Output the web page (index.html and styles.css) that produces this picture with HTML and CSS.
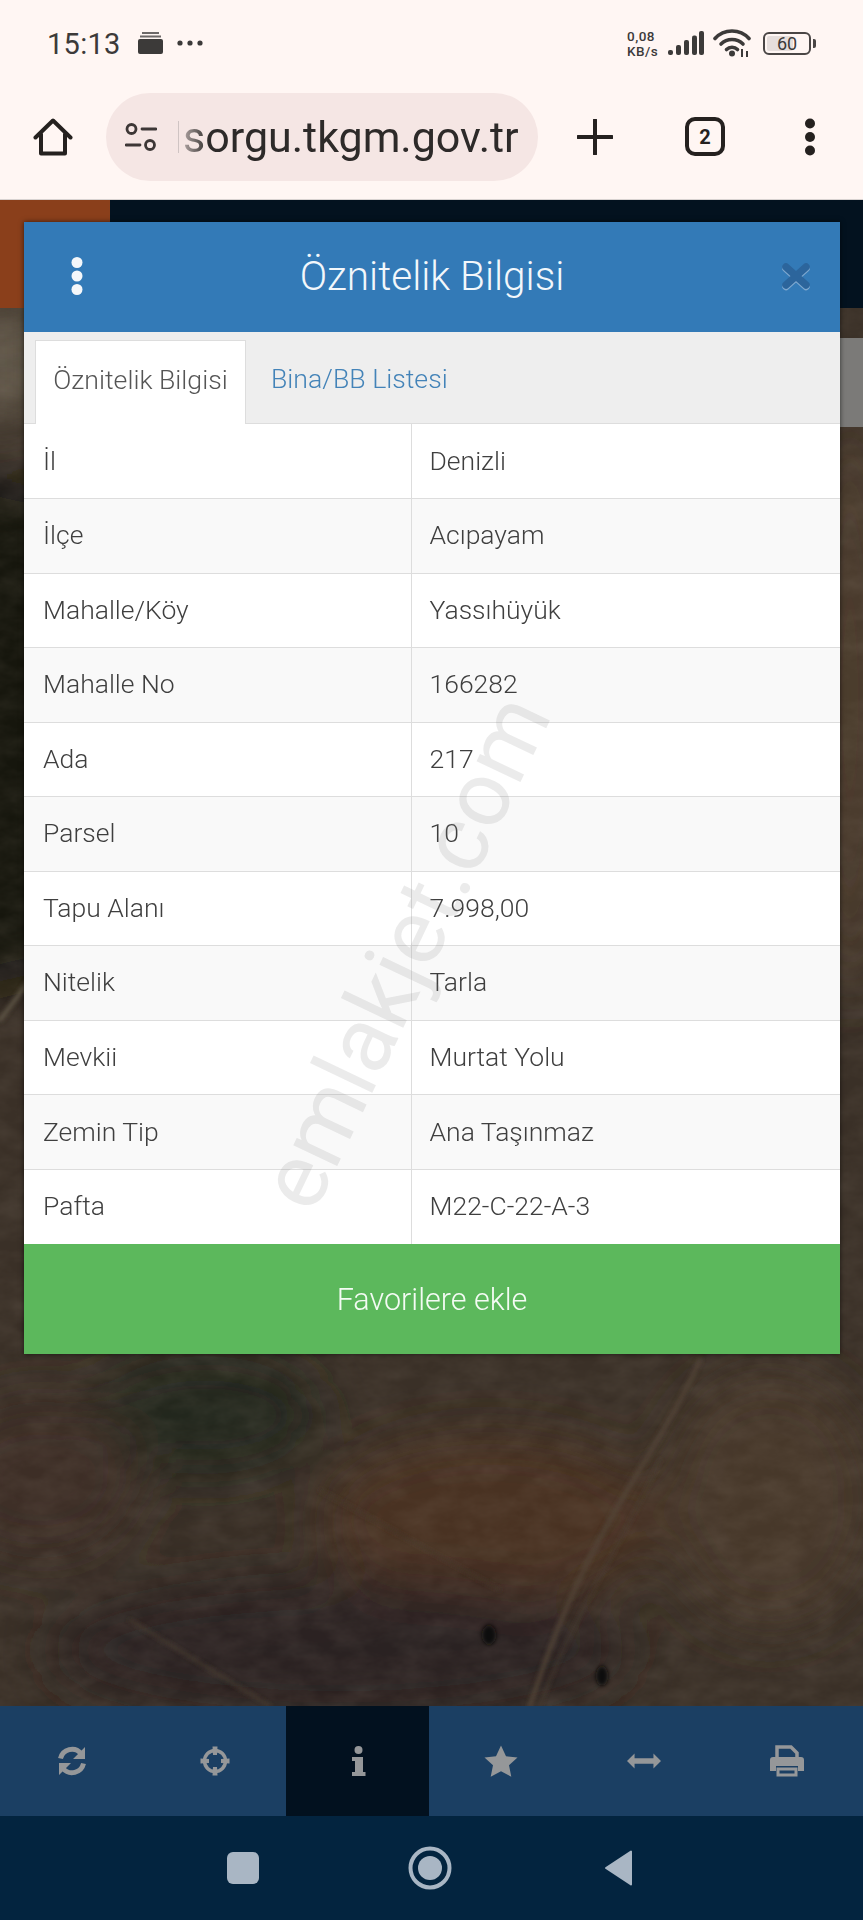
FILE: index.html
```html
<!DOCTYPE html>
<html lang="tr">
<head>
<meta charset="utf-8">
<title>Öznitelik Bilgisi</title>
<link rel="stylesheet" href="styles.css">
</head>
<body>
<div class="phone">
  <header class="status">
    <span class="time">15:13</span>
    <svg class="ic-card" viewBox="0 0 25 22"><path d="M4 0h17v2H4zM2 3.500h21v2H2z" opacity=".75"/><rect y="7" width="25" height="15" rx="2"/></svg>
    <svg class="ic-more" viewBox="0 0 26 6"><circle cx="3" cy="3" r="2.600"/><circle cx="13" cy="3" r="2.600"/><circle cx="23" cy="3" r="2.600"/></svg>
    <div class="status-right">
      <div class="speed"><span>0,08</span><span>KB/s</span></div>
      <svg class="ic-signal" viewBox="0 0 36 25"><rect x="0" y="19" width="5" height="5" rx="2"/><rect x="8" y="14" width="5" height="10" rx="2"/><rect x="16" y="9" width="5" height="15" rx="2"/><rect x="24" y="4.500" width="5" height="19.500" rx="2"/><rect x="31" y="0" width="5" height="24" rx="2"/></svg>
      <svg class="ic-wifi" viewBox="0 0 38 28"><g fill="none" stroke="#3c3a39" stroke-width="3.600" stroke-linecap="round"><path d="M2 9.500C11-.5 27-.5 36 9.500"/><path d="M8 15c6-6 16-6 22 0"/><path d="M13.500 20.500c3-3 8-3 11 0"/></g><circle cx="19" cy="24.500" r="3"/><path d="M28 20h2v8h-2zM33 22h2v6h-2z"/></svg>
      <div class="battery"><span class="battery-fill"></span><span class="battery-num">60</span></div>
      <span class="battery-tip"></span>
    </div>
  </header>

  <nav class="toolbar">
    <svg class="ic-home" viewBox="0 0 40 38"><path d="M2.500 19.500 20 2.500l17.500 17M8 16v19.500h24V16" fill="none" stroke="#25211f" stroke-width="4" stroke-linejoin="round" stroke-linecap="round"/></svg>
    <div class="pill">
      <svg class="ic-tune" viewBox="0 0 32 28"><g fill="none" stroke="#3d3736" stroke-width="2.800"><circle cx="6.500" cy="6" r="4.500"/><circle cx="25" cy="22" r="4.500"/><path d="M17 6h14M1 22h14" stroke-linecap="round"/></g></svg>
      <span class="divider"></span>
      <span class="url">sorgu.tkgm.gov.tr</span>
    </div>
    <svg class="ic-plus" viewBox="0 0 36 36"><path d="M18 1v34M1 18h34" stroke="#25211f" stroke-width="4" stroke-linecap="round"/></svg>
    <div class="tabs-count">2</div>
    <svg class="ic-kebab" viewBox="0 0 12 38"><circle cx="6" cy="5.500" r="5"/><circle cx="6" cy="19" r="5"/><circle cx="6" cy="32.500" r="5"/></svg>
  </nav>

  <main class="stage">
    <div class="map">
      <div class="strip-orange"></div>
      <div class="strip-navy"></div>
      <div class="strip-grey"></div>
      <svg class="map-art" viewBox="0 0 863 1506" preserveAspectRatio="none">
        <defs>
          <filter id="soft" x="-40%" y="-40%" width="180%" height="180%"><feGaussianBlur stdDeviation="26"/></filter>
          <filter id="soft2" x="-30%" y="-30%" width="160%" height="160%"><feGaussianBlur stdDeviation="2"/></filter>
          <filter id="grain" x="0" y="0" width="100%" height="100%"><feTurbulence type="fractalNoise" baseFrequency="0.03 0.05" numOctaves="4" seed="11"/><feColorMatrix values="0 0 0 0 0.42  0 0 0 0 0.35  0 0 0 0 0.28  0.9 0.5 0 0 -0.48"/></filter>
        </defs>
        <rect width="863" height="1506" fill="#3a3027"/>
        <g filter="url(#soft)">
          <path d="M-80 262 L90 300 L90 760 L-80 800Z" fill="#131510"/>
          <ellipse cx="205" cy="1215" rx="115" ry="60" fill="#23261e"/>
          <ellipse cx="490" cy="1320" rx="170" ry="85" fill="#4a3222"/>
          <ellipse cx="340" cy="1450" rx="290" ry="70" fill="#2a2420"/>
          <ellipse cx="770" cy="1300" rx="110" ry="130" fill="#46372b"/>
          <ellipse cx="40" cy="1280" rx="100" ry="80" fill="#3c2d25"/>
          <ellipse cx="850" cy="500" rx="40" ry="300" fill="#4d3e2f"/>
          <path d="M-60 108 h100 v110 h-100Z" fill="#635a4c"/>
        </g>
        <rect width="863" height="1506" filter="url(#grain)" opacity=".18"/>
        <g fill="none" stroke-linecap="round" filter="url(#soft2)">
          <path d="M700 1160C650 1270 590 1320 530 1506" stroke="#534537" stroke-width="4"/>
          <path d="M660 1260C630 1330 570 1420 540 1506" stroke="#483c30" stroke-width="3" opacity=".7"/>
          <path d="M130 1420L270 1506" stroke="#493d32" stroke-width="2.500"/>
          <path d="M320 1290L500 1390" stroke="#46372b" stroke-width="2.500"/>
          <path d="M0 820L30 780" stroke="#625848" stroke-width="4"/>
        </g>
        <g fill="#100f0b" filter="url(#soft2)">
          <ellipse cx="489" cy="1435" rx="7" ry="10"/>
          <ellipse cx="602" cy="1476" rx="6" ry="10"/>
        </g>
      </svg>
    </div>

    <section class="modal">
      <header class="modal-head">
        <svg class="ic-modal-kebab" viewBox="0 0 12 38"><circle cx="6" cy="5.500" r="5.500"/><circle cx="6" cy="19" r="5.500"/><circle cx="6" cy="32.500" r="5.500"/></svg>
        <h1 class="modal-title">Öznitelik Bilgisi</h1>
        <svg class="ic-close" viewBox="0 0 28 30"><path d="M4 6l20 18M24 6L4 24" stroke="#7fa8cf" stroke-width="7.500" stroke-linecap="round" transform="translate(0 1.500)"/><path d="M4 6l20 18M24 6L4 24" stroke="#2c659c" stroke-width="7.500" stroke-linecap="round"/></svg>
      </header>
      <div class="tabs">
        <span class="tab tab-active">Öznitelik Bilgisi</span>
        <span class="tab tab-link">Bina/BB Listesi</span>
      </div>
      <table class="attrs">
        <tbody>
          <tr><td>İl</td><td>Denizli</td></tr>
          <tr><td>İlçe</td><td>Acıpayam</td></tr>
          <tr><td>Mahalle/Köy</td><td>Yassıhüyük</td></tr>
          <tr><td>Mahalle No</td><td>166282</td></tr>
          <tr><td>Ada</td><td>217</td></tr>
          <tr><td>Parsel</td><td>10</td></tr>
          <tr><td>Tapu Alanı</td><td>7.998,00</td></tr>
          <tr><td>Nitelik</td><td>Tarla</td></tr>
          <tr><td>Mevkii</td><td>Murtat Yolu</td></tr>
          <tr><td>Zemin Tip</td><td>Ana Taşınmaz</td></tr>
          <tr><td>Pafta</td><td>M22-C-22-A-3</td></tr>
        </tbody>
      </table>
      <button class="fav" type="button">Favorilere ekle</button>
      <div class="watermark">emlakjet.com</div>
    </section>
  </main>

  <div class="bottombar">
    <div class="tool"><svg viewBox="0 0 32 32"><path d="M4.500 13.500A11.800 11.800 0 0 1 25 8.500" fill="none" stroke-width="5"/><path d="M29 2v12H17zM3 30V18h12z" stroke="none"/><path d="M27.500 18.500A11.800 11.800 0 0 1 7 23.500" fill="none" stroke-width="5"/></svg></div>
    <div class="tool"><svg viewBox="0 0 32 32"><circle cx="16" cy="16" r="10.500" fill="none" stroke-width="3.500"/><path d="M13.500 1.500h5L18 10h-4zM13.500 30.500h5L18 22h-4zM1.500 13.500v5L10 18v-4zM30.500 13.500v5L22 18v-4z" stroke="none"/></svg></div>
    <div class="tool tool-active"><svg viewBox="0 0 32 32"><circle cx="16.500" cy="5" r="4" stroke="none"/><path d="M10 12h11v15h2.500v4H10v-4h3V16h-3z" stroke="none"/></svg></div>
    <div class="tool"><svg class="wide" viewBox="0 0 34 32"><path d="M17 .5l5 10.700 11.500 1.300-8.500 7.800 2.300 11.400L17 26.200 6.700 31.700 9 20.300.5 12.500 12 11.200z" stroke="none"/></svg></div>
    <div class="tool"><svg class="wide" viewBox="0 0 36 32"><path d="M0 16l8-8v5h20V8l8 8-8 8v-5H8v5z" stroke="none"/></svg></div>
    <div class="tool"><svg class="wide" viewBox="0 0 34 32"><path d="M7 13V2h14l6 6v5" fill="none" stroke-width="3.500"/><path d="M3 12h28a3 3 0 0 1 3 3v11h-6v-5H6v5H0V15a3 3 0 0 1 3-3z" stroke="none"/><path d="M8 24h18v6H8z" fill="none" stroke-width="3"/></svg></div>
  </div>

  <footer class="navbar">
    <span class="nav-square"></span>
    <svg class="nav-circle" viewBox="0 0 44 44"><circle cx="22" cy="22" r="19.500" fill="none" stroke="#a9b6c4" stroke-width="4"/><circle cx="22" cy="22" r="12" fill="#a9b6c4"/></svg>
    <svg class="nav-back" viewBox="0 0 29 36"><path d="M27 1.500v33L2 18z" fill="#a9b6c4" stroke="#a9b6c4" stroke-width="2" stroke-linejoin="round"/></svg>
  </footer>
</div>
</body>
</html>
```

FILE: styles.css
```css
* { box-sizing: border-box; }
html, body { margin: 0; padding: 0; }
body { width: 863px; height: 1920px; overflow: hidden; font-family: Roboto, "Liberation Sans", sans-serif; }

.phone { width: 863px; height: 1920px; display: flex; flex-direction: column; background: #fff6f3; }

/* status bar */
.status { height: 74px; flex: none; display: flex; align-items: center; padding: 13px 53px 0 47px; color: #3c3a39; }
.time { font-size: 29px; line-height: 34px; letter-spacing: .3px; width: 91px; }
.ic-card { width: 25px; height: 22px; fill: #3c3a39; margin-top: -2px; }
.ic-more { width: 26px; height: 6px; fill: #3c3a39; margin-left: 14px; margin-top: -2px; }
.status-right { margin-left: auto; display: flex; align-items: center; margin-top: -1px; }
.speed { display: flex; flex-direction: column; gap: 1px; font-size: 13.500px; line-height: 14px; font-weight: 500; letter-spacing: .5px; width: 41px; }
.ic-signal { width: 36px; height: 25px; fill: #3c3a39; }
.ic-wifi { width: 38px; height: 28px; fill: #3c3a39; margin-left: 9px; }
.battery { width: 48px; height: 23px; margin-left: 12px; border: 2px solid #4a4645; border-radius: 6px; position: relative; display: flex; align-items: center; justify-content: center; font-size: 18px; }
.battery-fill { position: absolute; left: 2px; top: 2px; bottom: 2px; width: 26px; background: #e6dedc; border-radius: 2px; }
.battery-num { position: relative; }
.battery-tip { width: 3px; height: 9px; background: #4a4645; border-radius: 0 2px 2px 0; margin-left: 2px; margin-right: -6px; }

/* browser toolbar */
.toolbar { height: 126px; flex: none; display: flex; align-items: center; padding: 0 0 0 33px; border-bottom: 1px solid #d8d2d0; }
.ic-home { width: 40px; height: 38px; flex: none; }
.pill { width: 432px; height: 88px; flex: none; margin-left: 33px; background: #f5e6e4; border-radius: 44px; display: flex; align-items: center; padding-left: 19px; overflow: hidden; }
.ic-tune { width: 32px; height: 28px; flex: none; }
.divider { width: 1px; height: 32px; background: #cfc4c3; margin-left: 21px; flex: none; }
.url { font-size: 43px; line-height: 50px; color: #2d2a29; margin-left: 4px; white-space: nowrap; -webkit-mask-image: linear-gradient(90deg, rgba(0,0,0,.35), #000 26px); mask-image: linear-gradient(90deg, rgba(0,0,0,.35), #000 26px); }
.ic-plus { width: 36px; height: 36px; margin-left: 39px; flex: none; }
.tabs-count { width: 40px; height: 39px; margin-left: 72px; flex: none; border: 4px solid #25211f; border-radius: 10px; display: flex; align-items: center; justify-content: center; font-size: 20px; font-weight: 700; color: #25211f; }
.ic-kebab { width: 12px; height: 38px; margin-left: 79px; flex: none; fill: #25211f; }

/* map stage */
.stage { flex: 1; position: relative; padding: 22px 23px 0 24px; overflow: hidden; }
.map { position: absolute; inset: 0; z-index: 0; background: #3a3027; }
.map-art { position: absolute; left: 0; top: 0; width: 863px; height: 1506px; }
.strip-navy { position: absolute; z-index: 1; left: 110px; right: 0; top: 0; height: 108px; background: #03121f; }
.strip-orange { position: absolute; z-index: 1; left: 0; width: 110px; top: 0; height: 108px; background: #8a3f1b; }
.strip-grey { position: absolute; z-index: 1; right: 0; width: 23px; top: 138px; height: 89px; background: #7b7a78; }

/* modal */
.modal { position: relative; z-index: 1; width: 816px; background: #fff; box-shadow: 0 0 5px rgba(0,0,0,.6); overflow: hidden; }
.modal-head { height: 110px; background: #337ab7; position: relative; display: flex; align-items: center; justify-content: center; }
.modal-title { margin: 0; font-size: 40.500px; line-height: 44px; font-weight: 300; color: #f2f7fb; margin-top: -2px; }
.ic-modal-kebab { position: absolute; left: 47px; top: 35px; width: 12px; height: 38px; fill: #f4f7fa; }
.ic-close { position: absolute; right: 30px; top: 39px; width: 28px; height: 30px; }
.tabs { height: 92px; background: #eee; padding: 8px 0 0 11px; display: flex; border-bottom: 1px solid #ddd; }
.tab { height: 84px; font-size: 26.700px; line-height: 78px; font-weight: 300; }
.tab-active { width: 211px; background: #fff; border: 1px solid #ddd; border-bottom: 0; color: #555; text-align: center; }
.tab-link { margin-left: 25px; color: #4383b8; }
.attrs { width: 100%; height: 820px; border-collapse: collapse; table-layout: fixed; font-size: 26.500px; font-weight: 300; color: #3f3f3f; }
.attrs td { padding: 0 0 2px 18px; border-top: 1px solid #ddd; height: 74.500px; }
.attrs tr:first-child td { border-top: 0; }
.attrs td:first-child { width: 387px; padding-left: 19px; border-right: 1px solid #ddd; }
.attrs tr:nth-child(even) { background: #f9f9f9; }
.fav { display: block; width: 100%; height: 110px; border: 0; background: #5cb85c; color: #f4fbf4; font: 300 30.500px Roboto, "Liberation Sans", sans-serif; }
.watermark { position: absolute; left: 381px; top: 730px; transform: translate(-50%, -50%) rotate(-64.500deg); font-size: 92px; line-height: 110px; font-weight: 400; color: rgba(130,130,130,.16); white-space: nowrap; pointer-events: none; }

/* map tools */
.bottombar { height: 110px; flex: none; display: flex; background: #1b3f63; }
.tool { flex: none; width: 143px; display: flex; align-items: center; justify-content: center; }
.tool svg { width: 32px; height: 32px; fill: #959799; stroke: #959799; }
.tool svg.wide { width: 34px; height: 32px; }
.tool-active { background: #02111f; }

/* android nav */
.navbar { height: 104px; flex: none; background: #03243f; position: relative; display: flex; align-items: center; padding-left: 227px; }
.nav-square { width: 32px; height: 32px; background: #a9b6c4; border-radius: 6px; flex: none; }
.nav-circle { width: 44px; height: 44px; margin-left: 149px; flex: none; }
.nav-back { width: 29px; height: 36px; margin-left: 152px; flex: none; }
```
